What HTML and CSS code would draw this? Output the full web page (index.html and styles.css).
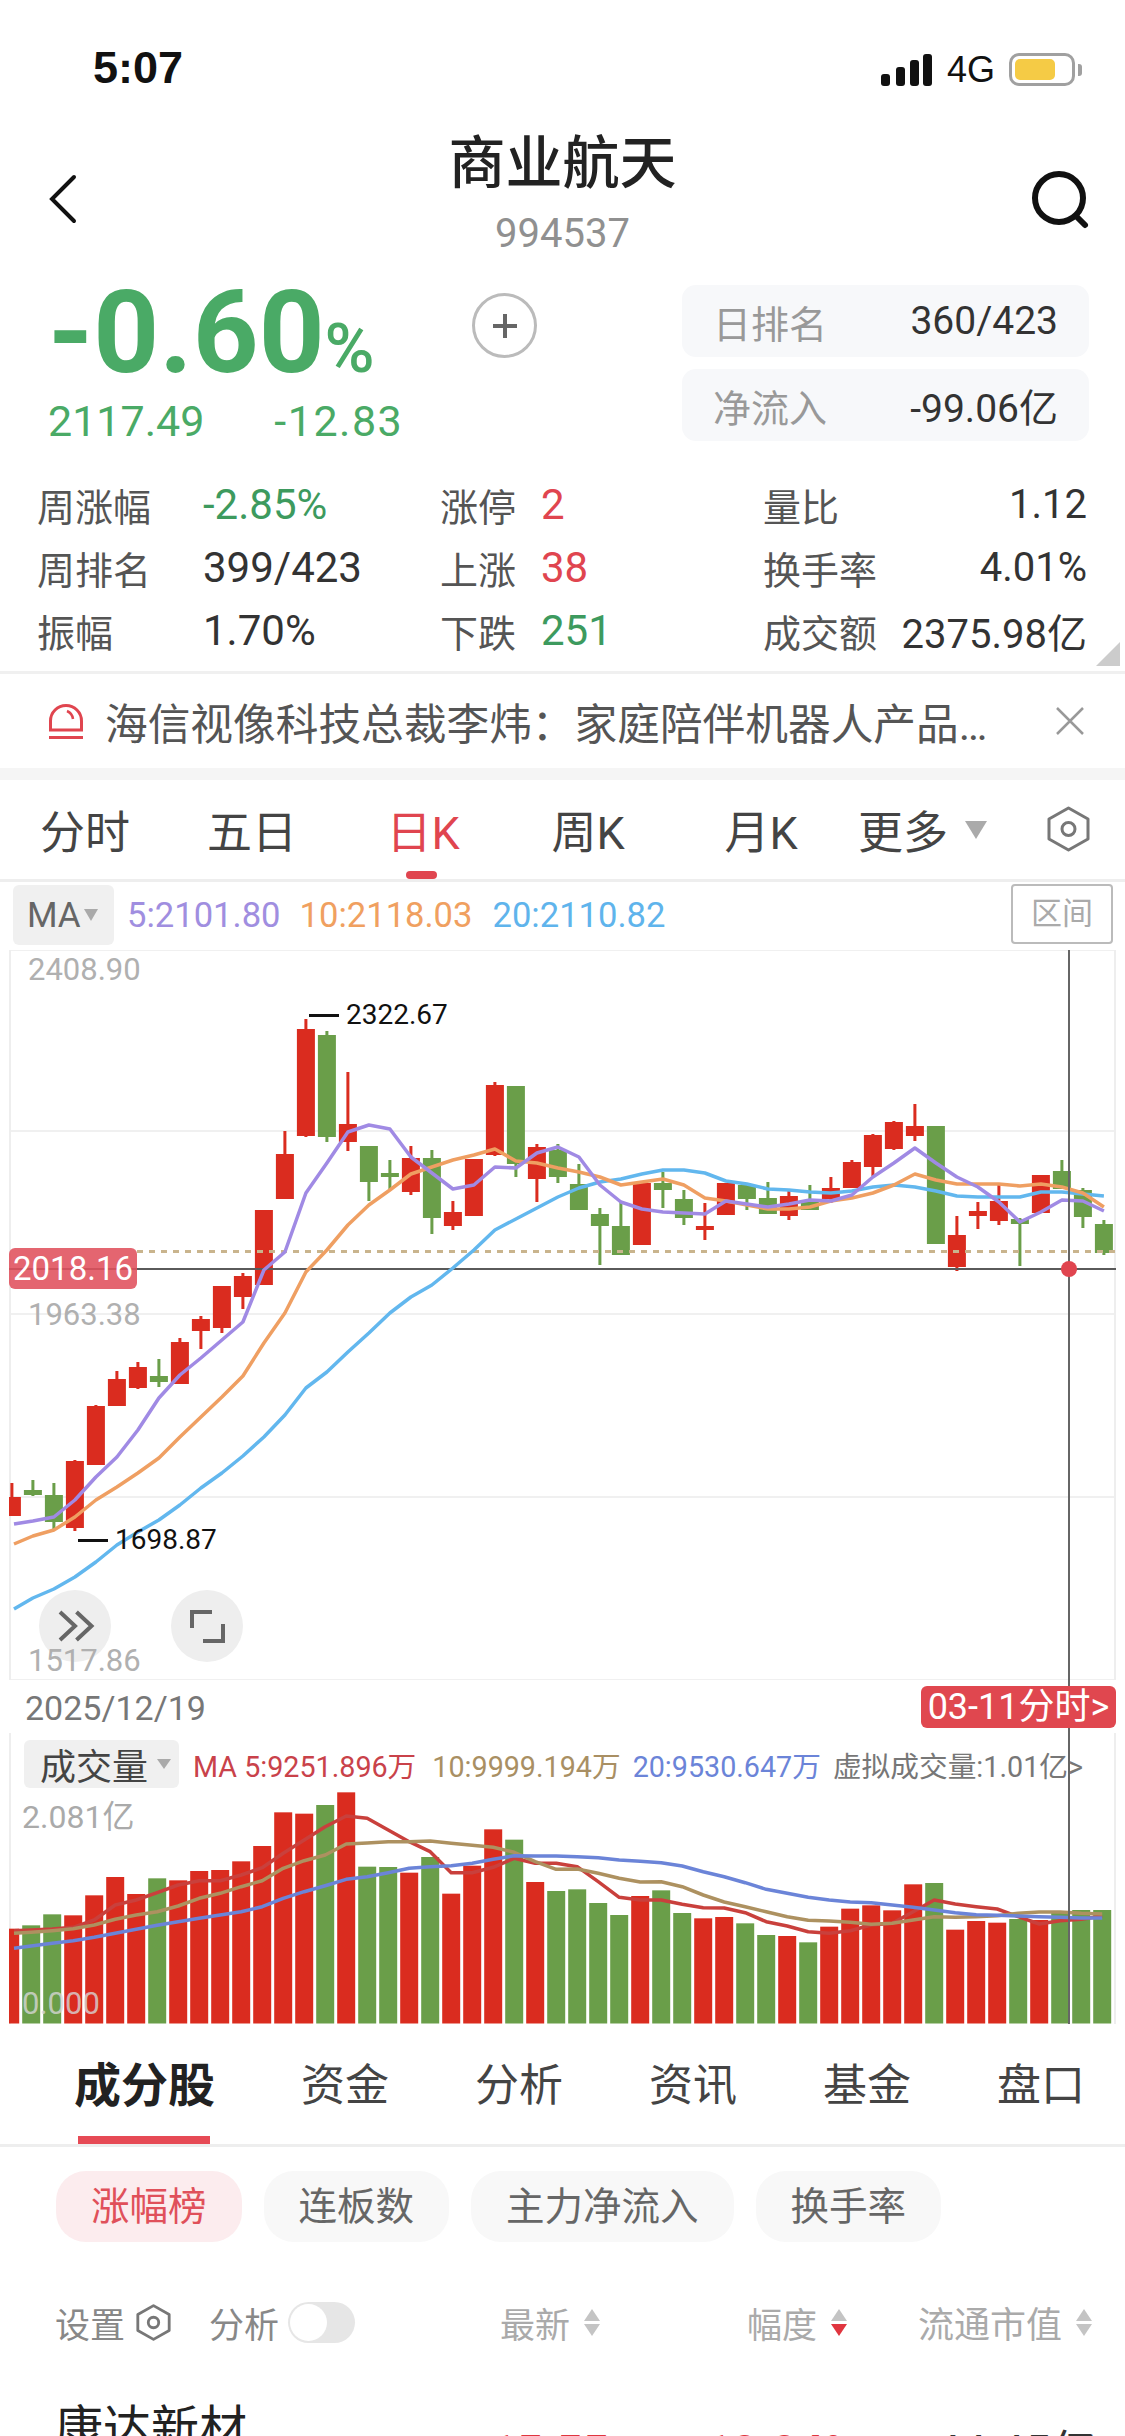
FILE: index.html
```html
<!DOCTYPE html>
<html lang="zh-CN">
<head>
  <meta charset="UTF-8" />
  <meta name="viewport" content="width=device-width, initial-scale=1.0" />
  <title>商业航天</title>
  <link rel="stylesheet" href="styles.css">
</head>
<body>
<div class="page">

  <!-- status bar -->
  <div class="status">
    <span class="time">5:07</span>
    <div class="status-right">
      <svg class="signal" width="51" height="32" viewBox="0 0 51 32">
        <rect x="0" y="20" width="9" height="12" rx="3"/>
        <rect x="15" y="13" width="9" height="19" rx="3"/>
        <rect x="29" y="6" width="9" height="26" rx="3"/>
        <rect x="42" y="0" width="9" height="32" rx="3"/>
      </svg>
      <span class="net">4G</span>
      <div class="battery"><div class="battery-fill"></div></div>
      <div class="battery-nub"></div>
    </div>
  </div>

  <!-- title -->
  <div class="nav">
    <svg class="nav-back" width="30" height="50" viewBox="0 0 30 50">
      <path d="M26 3 L4 25 L26 47" />
    </svg>
    <div class="nav-title">
      <h1>商业航天</h1>
      <p>994537</p>
    </div>
    <svg class="nav-search" width="60" height="62" viewBox="0 0 60 62">
      <circle cx="28" cy="27" r="24" />
      <path d="M46 46 L54 54" />
    </svg>
  </div>

  <!-- quote -->
  <div class="quote">
    <div class="quote-main">
      <div class="quote-pct">-0.60<small>%</small></div>
      <div class="quote-sub"><span>2117.49</span><span>-12.83</span></div>
    </div>
    <div class="quote-add">
      <svg width="30" height="30" viewBox="0 0 30 30"><path d="M15 3 V27 M3 15 H27" /></svg>
    </div>
    <div class="quote-side">
      <div class="pill"><span>日排名</span><b>360/423</b></div>
      <div class="pill"><span>净流入</span><b>-99.06亿</b></div>
    </div>
  </div>

  <!-- stats -->
  <div class="stats">
    <div class="stat"><span class="k">周涨幅</span><span class="v green">-2.85%</span></div>
    <div class="stat stat-mid"><span class="k">涨停</span><span class="v red">2</span></div>
    <div class="stat stat-end"><span class="k">量比</span><span class="v">1.12</span></div>
    <div class="stat"><span class="k">周排名</span><span class="v">399/423</span></div>
    <div class="stat stat-mid"><span class="k">上涨</span><span class="v red">38</span></div>
    <div class="stat stat-end"><span class="k">换手率</span><span class="v">4.01%</span></div>
    <div class="stat"><span class="k">振幅</span><span class="v">1.70%</span></div>
    <div class="stat stat-mid"><span class="k">下跌</span><span class="v green">251</span></div>
    <div class="stat stat-end"><span class="k">成交额</span><span class="v">2375.98亿</span></div>
    <div class="stats-corner"></div>
  </div>

  <!-- news -->
  <div class="banner">
    <svg class="banner-icon" width="36" height="36" viewBox="0 0 36 36">
      <path d="M2.5 27 V18 A15.5 15.5 0 0 1 33.5 18 V27 Z" />
      <path d="M1 34.5 H35" />
      <path class="thin" d="M19 8 A10 10 0 0 1 25 16" />
    </svg>
    <span class="banner-text">海信视像科技总裁李炜：家庭陪伴机器人产品…</span>
    <svg class="banner-close" width="30" height="28" viewBox="0 0 30 28"><path d="M2 1 L28 27 M28 1 L2 27" /></svg>
  </div>
  <div class="gap"></div>

  <!-- period tabs -->
  <div class="period">
    <span>分时</span>
    <span>五日</span>
    <span class="on">日K</span>
    <span>周K</span>
    <span>月K</span>
    <div class="period-more">更多<i class="tri tri-more"></i></div>
    <svg class="hex hex-big" width="43" height="46" viewBox="0 0 43 46">
      <path d="M21.5 2 L41 13 V33 L21.5 44 L2 33 V13 Z" />
      <circle cx="21.5" cy="23" r="6.5" />
    </svg>
  </div>

  <!-- ma line -->
  <div class="ma-row">
    <div class="ma-chip">MA<i class="tri tri-small"></i></div>
    <span class="c-purple">5:2101.80</span>
    <span class="c-orange">10:2118.03</span>
    <span class="c-blue">20:2110.82</span>
    <div class="range">区间</div>
  </div>

  <!-- charts -->
  <div class="charts">
    <div class="kline">
      <svg id="klineChart" width="1125" height="730" viewBox="0 950 1125 730"></svg>
      <span class="axis a-top">2408.90</span>
      <span class="axis a-mid">1963.38</span>
      <div class="mark mark-high"><i></i>2322.67</div>
      <div class="mark mark-low"><i></i>1698.87</div>
      <div class="price-tag">2018.16</div>
      <div class="round-btn btn-play">
        <svg width="72" height="72" viewBox="0 0 72 72"><path d="M21 22 L36 36 L21 50 M37.5 22 L52.5 36 L37.5 50" /></svg>
      </div>
      <div class="round-btn btn-full">
        <svg width="72" height="72" viewBox="0 0 72 72"><path d="M21 38 V22 H41 M52 34 V51 H32" /></svg>
      </div>
      <span class="axis a-low">1517.86</span>
    </div>
    <div class="date-row">
      <span>2025/12/19</span>
      <div class="day-tag">03-11分时&gt;</div>
    </div>
    <div class="vol">
      <svg id="volChart" width="1125" height="291" viewBox="0 1733 1125 291"></svg>
      <div class="vol-head">
        <div class="vol-chip">成交量<i class="tri tri-vol"></i></div>
        <span class="c-vred">MA 5:9251.896万</span>
        <span class="c-vtan">10:9999.194万</span>
        <span class="c-vblue">20:9530.647万</span>
        <span class="c-vgray">虚拟成交量:1.01亿&gt;</span>
      </div>
      <span class="axis v-top">2.081亿</span>
      <span class="axis v-low">0.000</span>
    </div>
    <div class="cross-v"></div>
    <div class="cross-dot"></div>
  </div>

  <!-- lower tabs -->
  <div class="tabs">
    <span class="on">成分股</span>
    <span>资金</span>
    <span>分析</span>
    <span>资讯</span>
    <span>基金</span>
    <span>盘口</span>
  </div>

  <div class="chips">
    <span class="chip on">涨幅榜</span>
    <span class="chip">连板数</span>
    <span class="chip">主力净流入</span>
    <span class="chip">换手率</span>
  </div>

  <div class="thead">
    <div class="thead-left">
      <span>设置</span>
      <svg class="hex hex-small" width="35" height="37" viewBox="0 0 43 46">
        <path d="M21.5 2 L41 13 V33 L21.5 44 L2 33 V13 Z" />
        <circle cx="21.5" cy="23" r="6.5" />
      </svg>
      <span class="thead-an">分析</span>
      <div class="toggle"><div class="knob"></div></div>
    </div>
    <div class="th th-new">最新<svg class="sort" width="16" height="27" viewBox="0 0 16 27"><path d="M8 0 L16 12 H0 Z" /><path d="M8 27 L0 15 H16 Z" /></svg></div>
    <div class="th th-pct">幅度<svg class="sort" width="16" height="27" viewBox="0 0 16 27"><path d="M8 0 L16 12 H0 Z" /><path class="act" d="M8 27 L0 15 H16 Z" /></svg></div>
    <div class="th th-cap">流通市值<svg class="sort" width="16" height="27" viewBox="0 0 16 27"><path d="M8 0 L16 12 H0 Z" /><path d="M8 27 L0 15 H16 Z" /></svg></div>
  </div>

  <div class="stock">
    <span class="stock-name">康达新材</span>
    <span class="stock-num s-new">15.55</span>
    <span class="stock-num s-pct">10.04%</span>
    <span class="stock-num s-cap">44.45亿</span>
  </div>

</div>
<script src="chart.js"></script>
</body>
</html>
```

FILE: styles.css
```css
* {
  box-sizing: border-box;
}
html, body {
  margin: 0;
  padding: 0;
  background: #fff;
}
.page {
  position: relative;
  width: 1125px;
  height: 2436px;
  overflow: hidden;
  font-family: 'Roboto', 'Noto Sans CJK SC', sans-serif;
  color: #333;
  background: #fff;
}
.green { color: #3d9a5e; }
.red { color: #e0454f; }

/* status bar */
.status {
  height: 118px;
  padding: 42px 43px 0 93px;
  display: flex;
  justify-content: space-between;
  align-items: flex-start;
}
.time {
  font-family: 'Liberation Sans', sans-serif;
  font-size: 45px;
  font-weight: 700;
  line-height: 52px;
  color: #111;
}
.status-right {
  display: flex;
  align-items: center;
  padding-top: 11px;
}
.signal { fill: #111; }
.net {
  margin-left: 15px;
  font-family: 'Liberation Sans', sans-serif;
  font-size: 36px;
  line-height: 32px;
  color: #111;
}
.battery {
  margin-left: 14px;
  width: 66px;
  height: 33px;
  border: 3px solid #a0a0a0;
  border-radius: 10px;
  padding: 3px;
}
.battery-fill {
  width: 40px;
  height: 21px;
  background: #f5cb45;
  border-radius: 5px;
}
.battery-nub {
  margin-left: 3px;
  width: 4px;
  height: 12px;
  background: #a0a0a0;
  border-radius: 0 3px 3px 0;
}

/* title */
.nav {
  height: 152px;
  position: relative;
  text-align: center;
}
.nav-title h1 {
  margin: 0;
  padding-top: 11px;
  font-size: 57px;
  font-weight: 500;
  line-height: 70px;
  color: #222;
}
.nav-title p {
  margin: 12px 0 0;
  font-size: 40px;
  line-height: 46px;
  color: #909090;
}
.nav-back {
  position: absolute;
  left: 48px;
  top: 56px;
  fill: none;
  stroke: #111;
  stroke-width: 4;
  stroke-linecap: round;
}
.nav-search {
  position: absolute;
  left: 1031px;
  top: 53px;
  fill: none;
  stroke: #111;
  stroke-width: 6;
  stroke-linecap: round;
}

/* quote */
.quote {
  height: 186px;
  display: flex;
  align-items: flex-start;
}
.quote-main {
  width: 472px;
  padding-left: 48px;
}
.quote-pct {
  font-size: 115px;
  font-weight: 700;
  line-height: 126px;
  height: 126px;
  color: #4aaa66;
  white-space: nowrap;
}
.quote-pct small {
  font-size: 68px;
  font-weight: 500;
}
.quote-sub {
  display: flex;
  gap: 70px;
  font-size: 43px;
  line-height: 50px;
  color: #4aaa66;
}
.quote-sub span:last-child {
  letter-spacing: 1.5px;
}
.quote-add {
  margin-top: 23px;
  width: 65px;
  height: 65px;
  border: 3px solid #bbb;
  border-radius: 50%;
  display: flex;
  align-items: center;
  justify-content: center;
}
.quote-add svg {
  stroke: #666;
  stroke-width: 4;
  fill: none;
}
.quote-side {
  margin-left: 145px;
  margin-top: 15px;
  width: 407px;
  display: flex;
  flex-direction: column;
  gap: 12px;
}
.pill {
  height: 72px;
  padding: 0 31px;
  display: flex;
  justify-content: space-between;
  align-items: center;
  background: #f7f8fa;
  border-radius: 14px;
}
.pill span {
  font-size: 38px;
  color: #999;
}
.pill b {
  font-size: 39px;
  font-weight: 400;
  color: #333;
}

/* stats */
.stats {
  position: relative;
  height: 218px;
  padding: 17px 38px 0 37px;
  display: grid;
  grid-template-columns: 403px 323px 1fr;
  grid-auto-rows: 63px;
  border-bottom: 3px solid #f0f0f0;
}
.stat {
  display: flex;
  align-items: center;
  font-size: 42px;
  white-space: nowrap;
}
.stat .k {
  width: 166px;
  font-size: 38px;
  color: #555;
}
.stat-mid .k { width: 101px; }
.stat-end {
  justify-content: space-between;
  font-size: 40px;
}
.stat-end .k { width: auto; }
.stats-corner {
  position: absolute;
  right: 5px;
  bottom: 5px;
  width: 0;
  height: 0;
  border-bottom: 24px solid #ccc;
  border-left: 24px solid transparent;
}

/* news */
.banner {
  height: 94px;
  padding: 0 40px 0 48px;
  display: flex;
  align-items: center;
}
.banner-icon {
  flex: none;
  fill: none;
  stroke: #e0454f;
  stroke-width: 3;
}
.banner-icon .thin { stroke-width: 2.5; }
.banner-text {
  margin-left: 21px;
  flex: 1;
  font-size: 42.7px;
  color: #555;
  white-space: nowrap;
  overflow: hidden;
}
.banner-close {
  flex: none;
  fill: none;
  stroke: #999;
  stroke-width: 2.5;
}
.gap {
  height: 12px;
  background: #f5f5f5;
}

/* period tabs */
.period {
  position: relative;
  height: 102px;
  display: grid;
  grid-template-columns: 170px 164px 178px 152px 194px auto;
  align-items: center;
  border-bottom: 3px solid #eee;
  font-size: 45px;
  color: #444;
  text-align: center;
}
.period .on {
  color: #e0454f;
}
.period .on::after {
  content: "";
  position: absolute;
  left: 406px;
  top: 91px;
  width: 31px;
  height: 8px;
  background: #e0454f;
  border-radius: 4px;
}
.period-more {
  display: flex;
  align-items: center;
}
.tri {
  display: inline-block;
  width: 0;
  height: 0;
  border-style: solid;
  border-color: #aaa transparent transparent transparent;
}
.tri-more {
  margin-left: 17px;
  border-width: 18px 11px 0 11px;
}
.hex {
  fill: none;
  stroke: #777;
  stroke-width: 3;
  stroke-linejoin: round;
}
.hex-big {
  position: absolute;
  left: 1047px;
  top: 26px;
}

/* ma line */
.ma-row {
  position: relative;
  height: 68px;
  padding: 2px 0 4px 13px;
  display: flex;
  align-items: center;
  font-size: 34.6px;
  white-space: nowrap;
}
.ma-chip {
  width: 101px;
  height: 60px;
  padding-left: 14px;
  display: flex;
  align-items: center;
  background: #f0f0f0;
  border-radius: 6px;
  font-size: 35px;
  color: #666;
}
.tri-small {
  margin-left: 3px;
  border-width: 12px 7px 0 7px;
}
.c-purple { margin-left: 13px; color: #a08ee0; }
.c-orange { margin-left: 19px; color: #f0a060; }
.c-blue { margin-left: 20px; color: #5fb4ec; }
.range {
  position: absolute;
  left: 1011px;
  top: 2px;
  width: 102px;
  height: 60px;
  border: 2px solid #bbb;
  border-radius: 4px;
  font-size: 31px;
  line-height: 56px;
  text-align: center;
  color: #aaa;
}

/* charts */
.charts {
  position: relative;
  height: 1074px;
}
.kline {
  position: relative;
  height: 730px;
}
.kline svg,
.vol svg {
  display: block;
}
.axis {
  position: absolute;
  font-size: 31px;
  line-height: 36px;
  color: #b0b0b0;
}
.a-top { left: 28px; top: 2px; }
.a-mid { left: 28px; top: 347px; }
.a-low { left: 28px; top: 693px; }
.mark {
  position: absolute;
  display: flex;
  align-items: center;
  font-size: 28px;
  line-height: 32px;
  color: #111;
}
.mark i {
  width: 30px;
  height: 3px;
  margin-right: 7px;
  background: #111;
}
.mark-high { left: 309px; top: 49px; }
.mark-low { left: 78px; top: 574px; }
.price-tag {
  position: absolute;
  left: 9px;
  top: 298px;
  width: 128px;
  height: 41px;
  background: rgba(224, 80, 92, 0.88);
  border-radius: 6px;
  font-size: 33px;
  line-height: 41px;
  text-align: center;
  color: #fff;
}
.round-btn {
  position: absolute;
  top: 640px;
  width: 72px;
  height: 72px;
  background: #eee;
  border-radius: 50%;
}
.round-btn svg {
  fill: none;
  stroke: #666;
  stroke-width: 4;
}
.btn-play { left: 39px; }
.btn-full { left: 171px; }
.date-row {
  position: relative;
  height: 53px;
  padding: 8px 0 0 25px;
  font-size: 34px;
  line-height: 40px;
  color: #777;
}
.day-tag {
  position: absolute;
  left: 921px;
  top: 6px;
  width: 195px;
  height: 42px;
  z-index: 2;
  background: #e0474f;
  border-radius: 6px;
  font-size: 36px;
  line-height: 42px;
  text-align: center;
  color: #fff;
}
.vol {
  position: relative;
  height: 291px;
}
.vol-head {
  position: absolute;
  left: 24px;
  top: 7px;
  display: flex;
  align-items: center;
  font-size: 28.7px;
  white-space: nowrap;
}
.vol-chip {
  width: 155px;
  height: 48px;
  margin-right: 14px;
  padding-left: 16px;
  display: flex;
  align-items: center;
  background: #f0f0f0;
  border-radius: 6px;
  font-size: 36px;
  color: #444;
}
.tri-vol {
  margin-left: 9px;
  border-width: 10px 7px 0 7px;
}
.c-vred { color: #c9424a; }
.c-vtan { margin-left: 16px; color: #a98f63; }
.c-vblue { margin-left: 12px; color: #6b84d8; }
.c-vgray { margin-left: 12px; color: #777; }
.v-top { left: 22px; top: 66px; font-size: 32px; color: #aaa; }
.v-low { left: 22px; top: 253px; font-size: 31px; color: rgba(215, 215, 215, 0.8); }
.cross-v {
  position: absolute;
  left: 1068px;
  top: 0;
  width: 2px;
  height: 1074px;
  background: #666;
}
.cross-dot {
  position: absolute;
  left: 1061px;
  top: 311px;
  width: 16px;
  height: 16px;
  background: #e0454f;
  border-radius: 50%;
}

/* lower tabs */
.tabs {
  position: relative;
  height: 123px;
  padding: 32px 0 0 74px;
  display: flex;
  gap: 86px;
  border-bottom: 3px solid #eee;
  font-size: 44px;
  line-height: 60px;
  color: #444;
}
.tabs .on {
  position: relative;
  font-size: 47px;
  font-weight: 700;
  color: #222;
  height: 88px;
}
.tabs .on::after {
  content: "";
  position: absolute;
  left: 4px;
  right: 5px;
  bottom: 0;
  height: 8px;
  background: #e64a55;
}
.chips {
  padding: 24px 0 0 56px;
  display: flex;
  gap: 22px;
}
.chip {
  height: 71px;
  padding: 0 35px;
  background: #f8f8f8;
  border-radius: 30px;
  font-size: 38.5px;
  line-height: 71px;
  color: #666;
}
.chip.on {
  background: #fcecee;
  color: #e0505a;
}

/* table */
.thead {
  position: relative;
  height: 80px;
  margin-top: 40px;
  font-size: 35px;
  color: #aaa;
}
.thead-left {
  position: absolute;
  left: 55px;
  top: 0;
  height: 80px;
  display: flex;
  align-items: center;
  color: #888;
}
.hex-small {
  margin-left: 11px;
  stroke-width: 3.5;
}
.thead-an { margin-left: 38px; }
.toggle {
  width: 67px;
  height: 41px;
  margin-left: 9px;
  padding: 2px;
  background: #e6e6e6;
  border-radius: 21px;
}
.knob {
  width: 37px;
  height: 37px;
  background: #fff;
  border-radius: 50%;
}
.th {
  position: absolute;
  top: 0;
  height: 80px;
  display: flex;
  align-items: center;
  gap: 14px;
  white-space: nowrap;
}
.th-new { left: 500px; }
.th-pct { left: 747px; }
.th-cap { left: 918px; font-size: 36px; }
.sort { fill: #c4c4c4; }
.sort .act { fill: #e0353f; }
.stock {
  position: relative;
  height: 80px;
}
.stock-name {
  position: absolute;
  left: 55px;
  top: 32px;
  font-size: 48px;
  line-height: 70px;
  color: #222;
}
.stock-num {
  position: absolute;
  top: 60px;
  font-size: 46px;
  line-height: 60px;
  color: #e0353f;
  font-weight: 700;
}
.s-new { left: 490px; }
.s-pct { left: 705px; }
.s-cap { left: 935px; color: #333; font-weight: 400; }
```

FILE: chart.js
```js
// [color, bodyTop, bodyBottom, high, low] page y of each daily candle
const candles = [
  ["r",1497,1516,1483,1516],["g",1490,1495,1480,1496],["g",1495,1522,1483,1529],["r",1461,1528,1460,1531],
  ["r",1406,1465,1405,1465],["r",1379,1406,1371,1406],["r",1367,1388,1362,1389],["g",1376,1382,1359,1387],
  ["r",1342,1384,1338,1384],["r",1319,1331,1316,1349],["r",1286,1328,1286,1333],["r",1276,1297,1273,1309],
  ["r",1210,1285,1210,1285],["r",1154,1199,1131,1199],["r",1029,1136,1019,1137],["g",1035,1137,1031,1142],
  ["r",1124,1142,1072,1151],["g",1146,1182,1146,1201],["g",1173,1177,1160,1190],["r",1158,1192,1146,1195],
  ["g",1158,1218,1150,1234],["r",1212,1226,1201,1230],["r",1159,1216,1159,1216],["r",1085,1155,1082,1156],
  ["g",1086,1164,1086,1177],["r",1147,1179,1144,1202],["g",1150,1177,1144,1183],["g",1184,1210,1164,1210],
  ["g",1214,1226,1208,1265],["g",1226,1255,1202,1255],["r",1183,1245,1183,1245],["g",1183,1190,1172,1208],
  ["g",1199,1218,1190,1225],["r",1226,1230,1203,1240],["r",1183,1215,1183,1215],["g",1185,1199,1185,1210],
  ["g",1198,1214,1182,1214],["r",1196,1216,1191,1220],["g",1202,1210,1185,1210],["r",1188,1199,1177,1203],
  ["r",1162,1188,1160,1188],["r",1135,1167,1134,1176],["r",1122,1149,1121,1150],["r",1126,1136,1104,1141],
  ["g",1126,1244,1126,1244],["r",1235,1267,1216,1271],["r",1211,1216,1202,1229],["r",1201,1221,1185,1225],
  ["g",1219,1224,1218,1266],["r",1175,1213,1175,1213],["g",1171,1189,1160,1189],["g",1190,1217,1188,1228],
  ["g",1224,1253,1220,1255]
];

const ma5 = [1524,1521,1517,1500,1477,1457,1430,1398,1375,1358,1340,1322,1270,1252,1193,1163,1132,1125,1129,1157,
  1173,1189,1185,1167,1168,1153,1147,1157,1185,1202,1209,1212,1213,1214,1201,1204,1207,1204,1200,1201,
  1195,1177,1163,1148,1163,1177,1187,1202,1222,1212,1200,1201,1211];
const ma10 = [1544,1536,1530,1517,1500,1487,1473,1458,1437,1417,1397,1376,1343,1313,1272,1250,1225,1205,1190,1174,
  1167,1160,1155,1149,1161,1163,1168,1172,1177,1185,1182,1179,1185,1198,1201,1205,1209,1209,1207,1201,
  1198,1193,1185,1174,1180,1184,1184,1184,1186,1184,1187,1193,1207];
const ma20 = [1609,1598,1589,1577,1562,1545,1532,1520,1505,1488,1473,1456,1437,1415,1388,1372,1352,1333,1313,1297,
  1285,1268,1250,1230,1219,1208,1197,1188,1182,1179,1174,1170,1170,1173,1181,1184,1189,1190,1192,1193,
  1191,1187,1185,1187,1191,1196,1197,1197,1197,1192,1192,1194,1196];

// volume values are read in 1/3 px above the panel origin at y=1690
const volTops = [716,706,673,676,616,561,612,565,571,543,540,514,468,367,371,345,307,530,531,548,501,611,527,418,449,576,603,
  598,639,675,618,601,669,685,681,700,735,738,757,710,656,646,661,583,579,719,693,698,687,690,665,660,660];
const vma5 = [722,720,717,712,690,645,630,608,585,572,572,555,533,490,450,410,378,385,420,455,485,548,548,532,505,520,520,
  530,575,622,630,630,643,653,654,668,695,708,725,730,722,705,700,665,630,642,650,657,680,702,692,688,678];
const vma10 = [730,727,722,716,705,688,675,665,648,625,610,590,572,535,512,495,462,459,455,455,453,460,466,472,487,515,538,
  537,550,565,576,575,590,615,636,650,665,680,691,693,697,703,700,690,680,682,680,677,670,666,666,670,672];
const vma20 = [775,768,760,752,742,730,718,706,695,685,675,665,650,625,605,587,568,560,548,535,530,527,520,508,497,498,498,
  500,503,510,514,518,528,545,560,578,598,610,622,630,636,638,645,652,660,668,674,676,678,680,682,684,684];

const RED = "#da2c1f";
const GREEN = "#6a9e49";

function el(svg, name, attrs) {
  const node = document.createElementNS("http://www.w3.org/2000/svg", name);
  Object.keys(attrs).forEach(k => node.setAttribute(k, attrs[k]));
  svg.appendChild(node);
}

function hline(svg, y, color, extra) {
  el(svg, "line", Object.assign({ x1: 9, x2: 1116, y1: y, y2: y, stroke: color, "stroke-width": 2 }, extra));
}

function maLine(svg, xs, ys, color) {
  const points = ys.map((y, i) => xs(i).toFixed(1) + "," + y).join(" ");
  el(svg, "polyline", { points: points, fill: "none", stroke: color, "stroke-width": 3.5, "stroke-linejoin": "round" });
}

function drawKline() {
  const svg = document.getElementById("klineChart");
  const cx = i => 11.9 + 21 * i;
  [950, 1131, 1314, 1497, 1680].forEach(y => hline(svg, y, "#f0f0f0"));
  el(svg, "rect", { x: 9, y: 950, width: 2, height: 730, fill: "#eee" });
  el(svg, "rect", { x: 1114, y: 950, width: 2, height: 730, fill: "#eee" });

  candles.forEach((c, i) => {
    const color = c[0] === "r" ? RED : GREEN;
    const x = cx(i);
    const left = Math.max(x - 9, 9);
    el(svg, "rect", { x: x - 1.5, y: c[3], width: 3, height: c[4] - c[3], fill: color });
    el(svg, "rect", { x: left, y: c[1], width: x + 9 - left, height: c[2] - c[1], fill: color });
  });

  hline(svg, 1251.5, "#c9b48d", { x1: 137, "stroke-width": 3, "stroke-dasharray": "6 6" });
  hline(svg, 1269, "#5a5a5a");

  const lineX = i => (i === 0 ? 14 : cx(i));
  maLine(svg, lineX, ma20, "#62b7ee");
  maLine(svg, lineX, ma10, "#ef9f62");
  maLine(svg, lineX, ma5, "#a08ae4");
}

function drawVolume() {
  const svg = document.getElementById("volChart");
  const cx = i => 10.2 + 21 * i;
  const toY = v => (1690 + v / 3).toFixed(1);
  el(svg, "rect", { x: 9, y: 1733, width: 2, height: 291, fill: "#eee" });
  el(svg, "rect", { x: 1114, y: 1733, width: 2, height: 291, fill: "#eee" });

  volTops.forEach((v, i) => {
    const x = cx(i);
    const left = Math.max(x - 9, 9);
    const top = 1690 + v / 3;
    el(svg, "rect", {
      x: left, y: top, width: x + 9 - left, height: 2023.5 - top,
      fill: candles[i][0] === "r" ? RED : GREEN
    });
  });

  const lineX = i => (i === 0 ? 14 : cx(i));
  maLine(svg, lineX, vma5.map(toY), "#c9403c");
  maLine(svg, lineX, vma10.map(toY), "#ad9160");
  maLine(svg, lineX, vma20.map(toY), "#6b84d8");
}

drawKline();
drawVolume();
```
